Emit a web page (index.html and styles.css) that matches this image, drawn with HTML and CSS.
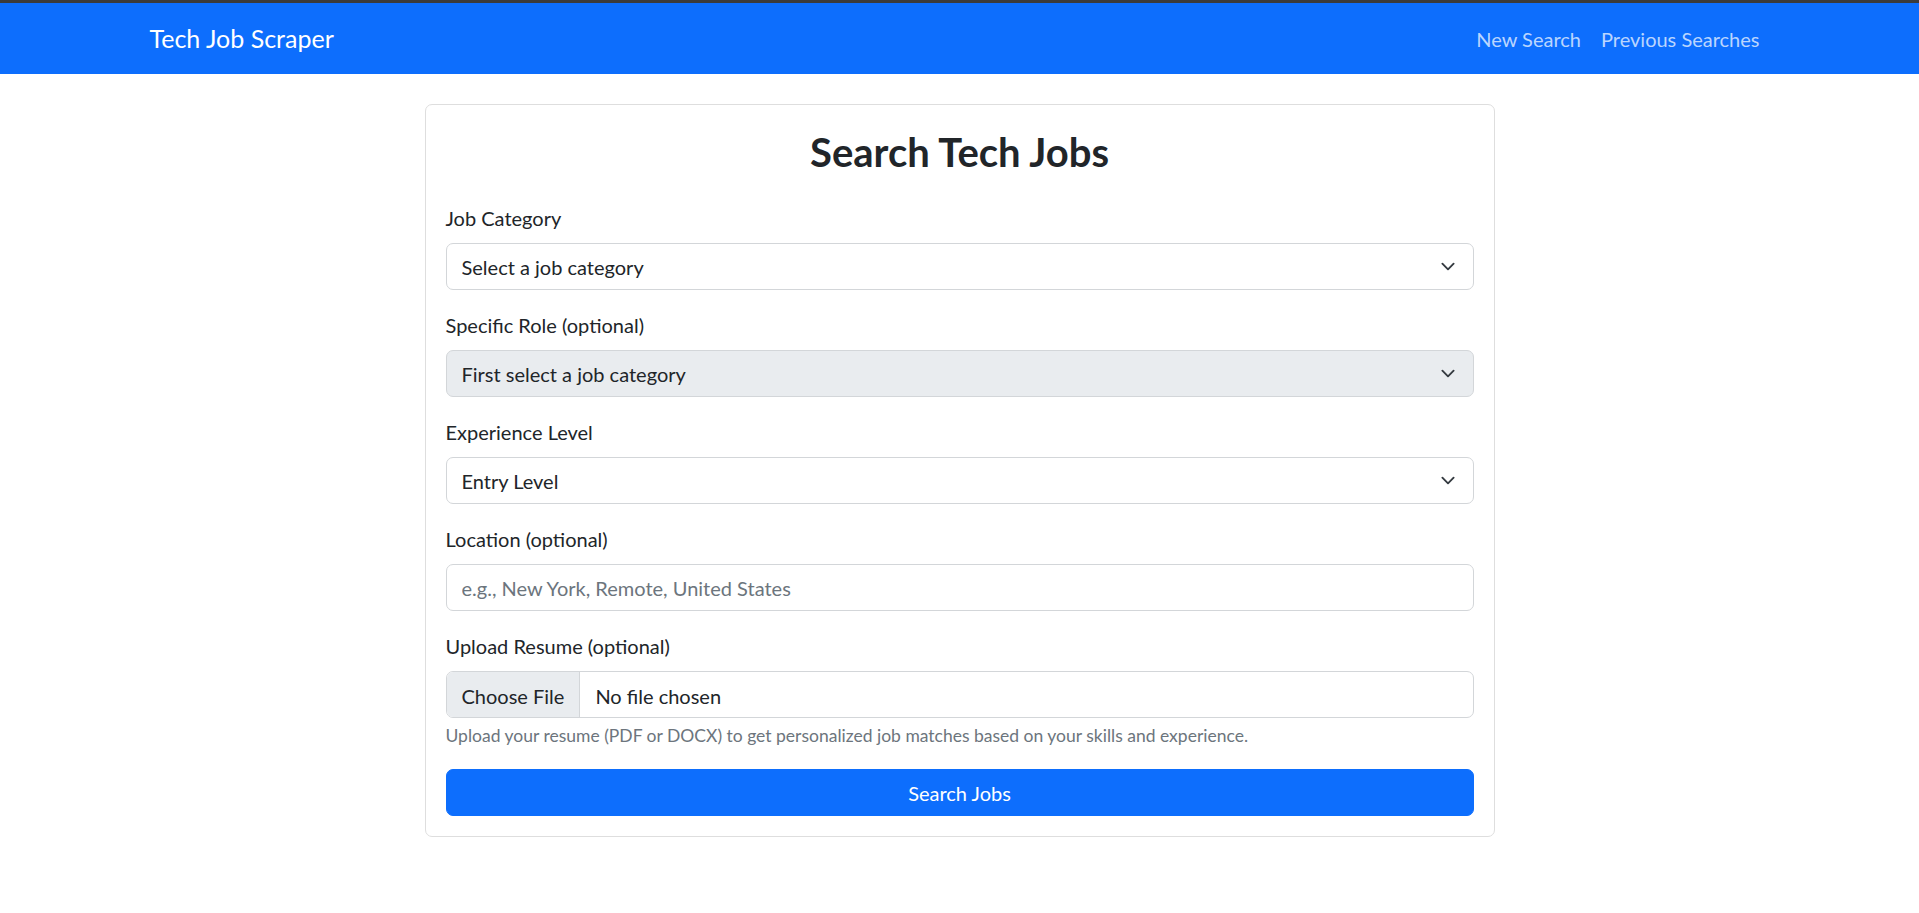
FILE: index.html
```html
<!DOCTYPE html>
<html lang="en">
<head>
<meta charset="utf-8">
<title>Tech Job Scraper</title>
<link rel="stylesheet" href="styles.css">
</head>
<body>
<div class="topline"></div>
<nav class="navbar">
  <div class="nav-inner">
    <a class="brand" href="#">Tech Job Scraper</a>
    <div class="nav-links">
      <a class="nav-link" href="#">New Search</a>
      <a class="nav-link" href="#">Previous Searches</a>
    </div>
  </div>
</nav>
<main class="main">
  <div class="card">
    <div class="card-body">
      <h2 class="title">Search Tech Jobs</h2>
      <form class="form">
        <div class="field">
          <label class="label" for="cat">Job Category</label>
          <select class="select" id="cat"><option>Select a job category</option></select>
        </div>
        <div class="field">
          <label class="label" for="role">Specific Role (optional)</label>
          <select class="select" id="role" disabled><option>First select a job category</option></select>
        </div>
        <div class="field">
          <label class="label" for="exp">Experience Level</label>
          <select class="select" id="exp"><option>Entry Level</option></select>
        </div>
        <div class="field">
          <label class="label" for="loc">Location (optional)</label>
          <input class="input" id="loc" type="text" placeholder="e.g., New York, Remote, United States">
        </div>
        <div class="field">
          <label class="label" for="resume">Upload Resume (optional)</label>
          <input class="input file" id="resume" type="file">
          <div class="help">Upload your resume (PDF or DOCX) to get personalized job matches based on your skills and experience.</div>
        </div>
        <button class="btn" type="button">Search Jobs</button>
      </form>
    </div>
  </div>
</main>
</body>
</html>
```
FILE: styles.css
```css
* { box-sizing: border-box; }
html, body { margin: 0; padding: 0; }
body {
  font-family: "Lato", "Open Sans", sans-serif;
  font-size: 20px;
  line-height: 1.5;
  color: #212529;
  background: #fff;
}
.topline { height: 3px; background: #3b3b3b; }
.navbar { background: #0d6efd; padding: 10.5px 0; }
.nav-inner {
  max-width: 1650px;
  margin: 0 auto;
  padding: 0 15px;
  display: flex;
  align-items: center;
  justify-content: space-between;
}
.brand {
  color: #fff;
  text-decoration: none;
  font-size: 25px;
  line-height: 37.5px;
  padding: 6.25px 0;
}
.nav-links { display: flex; }
.nav-link {
  color: rgba(255,255,255,0.72);
  text-decoration: none;
  padding: 10px 10px;
  line-height: 30px;
}
.main { padding-top: 30px; }
.card {
  width: 1070px;
  margin: 0 auto;
  border: 1px solid #dedede;
  border-radius: 7px;
  background: #fff;
}
.card-body { padding: 20px; }
.title {
  margin: 0 0 27px;
  padding-top: 3px;
  font-size: 40px;
  font-weight: 700;
  line-height: 1.2;
  text-align: center;
}
.field { margin-bottom: 20px; }
.label { display: block; margin-bottom: 10px; line-height: 30px; }
.select, .input {
  display: block;
  width: 100%;
  height: 47px;
  font: inherit;
  font-size: 20px;
  line-height: 30px;
  color: #212529;
  background-color: #fff;
  border: 1px solid #d3d6d9;
  border-radius: 7px;
  padding: 7px 15px;
  margin: 0;
  outline: none;
}
.select {
  appearance: none;
  -webkit-appearance: none;
  padding-right: 45px;
  background-image: url("data:image/svg+xml,%3csvg xmlns='http://www.w3.org/2000/svg' viewBox='0 0 16 16'%3e%3cpath fill='none' stroke='%23343a40' stroke-linecap='round' stroke-linejoin='round' stroke-width='2' d='m2 5 6 6 6-6'/%3e%3c/svg%3e");
  background-repeat: no-repeat;
  background-position: right 15px center;
  background-size: 20px 15px;
}
.select:disabled { background-color: #e9ecef; opacity: 1; }
.input::placeholder { color: #6c757d; opacity: 1; }
.file { overflow: hidden; }
.file::file-selector-button {
  font: inherit;
  padding: 7px 15px;
  margin: -7px 15px -7px -15px;
  color: #212529;
  background-color: #e9ecef;
  border: 0 solid #d3d6d9;
  border-right-width: 1px;
  border-radius: 0;
  height: 47px;
}
.help {
  margin-top: 5px;
  font-size: 17.5px;
  line-height: 26px;
  color: #6c757d;
}
.btn {
  display: block;
  width: 100%;
  height: 47px;
  font: inherit;
  font-size: 20px;
  line-height: 30px;
  padding: 7px 15px;
  color: #fff;
  background: #0d6efd;
  border: 1px solid #0d6efd;
  border-radius: 7px;
  cursor: pointer;
}
```
